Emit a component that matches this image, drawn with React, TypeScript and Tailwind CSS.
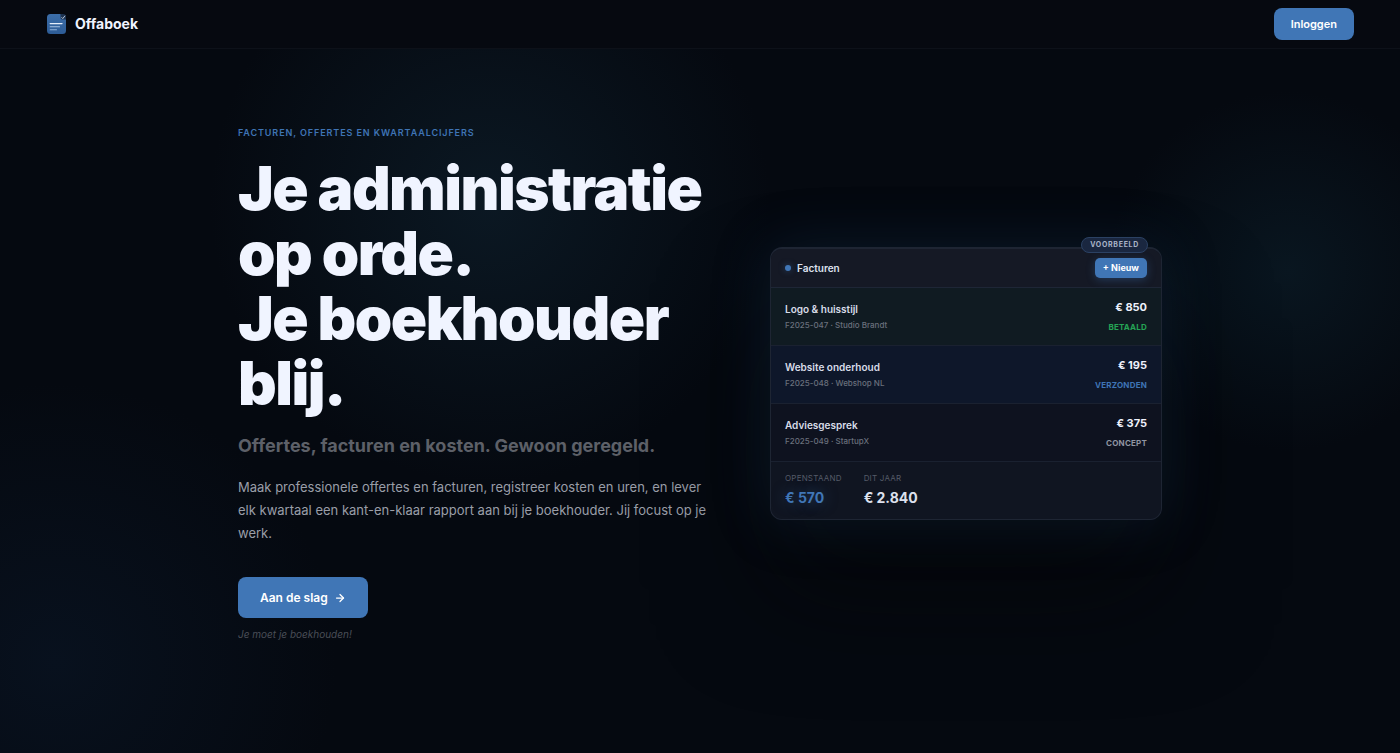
import { ArrowRight } from "lucide-react";
import clsx from "clsx";

interface Invoice {
  title: string;
  number: string;
  client: string;
  amount: string;
  status: string;
  rowClass: string;
  statusClass: string;
}

const invoices: Invoice[] = [
  {
    title: "Logo & huisstijl",
    number: "F2025-047",
    client: "Studio Brandt",
    amount: "€ 850",
    status: "Betaald",
    rowClass: "bg-[#101b22]",
    statusClass: "text-[#25a355]",
  },
  {
    title: "Website onderhoud",
    number: "F2025-048",
    client: "Webshop NL",
    amount: "€ 195",
    status: "Verzonden",
    rowClass: "bg-[#0e172a]",
    statusClass: "text-[#3f74b5]",
  },
  {
    title: "Adviesgesprek",
    number: "F2025-049",
    client: "StartupX",
    amount: "€ 375",
    status: "Concept",
    rowClass: "bg-[#0e121f]",
    statusClass: "text-[#9095a2]",
  },
];

const Logo = () => (
  <svg viewBox="0 0 20 20" className="size-5" aria-hidden="true">
    <defs>
      <linearGradient id="logo-fill" x1="0" y1="0" x2="0" y2="1">
        <stop offset="0" stopColor="#3c6ea9" />
        <stop offset="1" stopColor="#2d5c96" />
      </linearGradient>
    </defs>
    <path
      d="M3.5 0H13.5L19 5.5V16.5a3.5 3.5 0 0 1-3.5 3.5H3.5a3.5 3.5 0 0 1-3.5-3.5V3.5a3.5 3.5 0 0 1 3.5-3.5Z"
      fill="url(#logo-fill)"
    />
    <path d="M13.5 0V3.8a1.7 1.7 0 0 0 1.7 1.7H19V3a3 3 0 0 0-3-3Z" fill="#1c3250" />
    <path d="M14.8 3.6l1 1 2-2.6" fill="none" stroke="#b9c8dc" strokeWidth="1" strokeLinecap="round" />
    <path d="M3.2 9.6H15" stroke="#e6eefa" strokeWidth="1.4" strokeLinecap="round" />
    <path d="M3.2 12.8H12.5" stroke="#a9c4e4" strokeWidth="1.1" strokeLinecap="round" />
    <path d="M3.2 15.8H9.5" stroke="#8fb0d8" strokeWidth="1.1" strokeLinecap="round" />
  </svg>
);

const Header = () => (
  <header className="flex items-center justify-between border-b border-[#0d1119] bg-[#060910] pr-[46px] pl-[47px] py-2">
    <a href="#" className="flex items-center gap-2 text-sm font-bold text-[#f0f4ff]">
      <Logo />
      Offaboek
    </a>
    <button type="button" className="h-8 rounded-lg bg-[#4076b6] px-[17px] text-[11px] font-semibold text-white">
      Inloggen
    </button>
  </header>
);

const InvoiceRow = ({ invoice }: { invoice: Invoice }) => (
  <li
    className={clsx(
      "flex h-[58px] items-center justify-between border-b border-[#1a2130] px-[14px]",
      invoice.rowClass
    )}
  >
    <div>
      <p className="text-[10px] leading-4 font-semibold text-[#d8dce8]">{invoice.title}</p>
      <p className="text-[8px] leading-4 font-medium text-[#6a707c]">
        {invoice.number} · {invoice.client}
      </p>
    </div>
    <div className="flex flex-col items-end gap-1">
      <p className="text-[11px] leading-4 font-bold text-[#eef1fb]">{invoice.amount}</p>
      <p className={clsx("text-[8px] leading-4 font-bold tracking-wide uppercase", invoice.statusClass)}>
        {invoice.status}
      </p>
    </div>
  </li>
);

const InvoiceCard = () => (
  <div className="relative w-[392px] shrink-0">
    <div className="overflow-hidden rounded-xl border border-t-2 border-[#1e2533] bg-[#101521] shadow-[0_0_60px_rgba(35,85,135,0.22),0_70px_110px_rgba(5,5,6,0.6)]">
      <div className="flex h-[39px] items-center justify-between border-b border-[#1e2636] bg-[#151925] px-[14px]">
        <h2 className="flex items-center gap-[6px] text-[10px] font-semibold text-[#dde1ee]">
          <span className="size-[6px] rounded-full bg-[#4076b6] shadow-[0_0_6px_rgba(64,118,182,0.5)]" />
          Facturen
        </h2>
        <button
          type="button"
          className="h-5 rounded-[5px] bg-[#4076b6] px-2 text-[9px] font-bold text-white shadow-[0_2px_8px_rgba(64,118,182,0.35)]"
        >
          + Nieuw
        </button>
      </div>
      <ul>
        {invoices.map((invoice) => (
          <InvoiceRow key={invoice.number} invoice={invoice} />
        ))}
      </ul>
      <dl className="flex gap-[22px] px-[14px] pt-2 pb-[9px]">
        <div>
          <dt className="text-[8px] leading-4 tracking-wide text-[#555b68] uppercase">Openstaand</dt>
          <dd className="text-sm leading-6 font-bold text-[#4076b6] [text-shadow:0_0_14px_rgba(64,118,182,0.5)]">
            € 570
          </dd>
        </div>
        <div>
          <dt className="text-[8px] leading-4 tracking-wide text-[#555b68] uppercase">Dit jaar</dt>
          <dd className="text-sm leading-6 font-bold text-[#dde1ee]">€ 2.840</dd>
        </div>
      </dl>
    </div>
    <span className="absolute -top-[10px] right-[14px] rounded-full border border-[#2b4163] bg-[#1a2740] px-2 text-[7px] leading-[14px] font-bold tracking-widest text-[#aab4c8] uppercase">
      Voorbeeld
    </span>
  </div>
);

const Hero = () => (
  <main className="flex flex-1 justify-center px-8 pt-[76px] pb-24">
    <div className="flex w-full max-w-[924px] items-center gap-14 self-start">
      <section className="min-w-0 flex-1">
        <p className="text-[9px] leading-4 font-semibold tracking-widest text-[#3f74b5] uppercase">
          Facturen, offertes en kwartaalcijfers
        </p>
        <h1 className="mt-[15px] text-[60px] leading-[65px] font-black tracking-tight text-[#f0f4ff]">
          Je administratie
          <br />
          op orde.
          <br />
          Je boekhouder
          <br />
          blij.
        </h1>
        <p className="mt-4 text-lg leading-7 font-bold text-[#5d6068]">
          Offertes, facturen en kosten. Gewoon geregeld.
        </p>
        <p className="mt-4 text-[13px] leading-[23px] text-[#9a9ea8]">
          Maak professionele offertes en facturen, registreer kosten en uren, en lever elk kwartaal een kant-en-klaar
          rapport aan bij je boekhouder. Jij focust op je werk.
        </p>
        <a
          href="#"
          className="mt-8 flex h-[41px] w-fit items-center gap-[6px] rounded-lg bg-[#4076b6] px-[22px] text-xs font-semibold text-white"
        >
          Aan de slag
          <ArrowRight size={12} strokeWidth={2.5} />
        </a>
        <p className="mt-2 text-[10px] leading-4 text-[#4a4e57] italic">Je moet je boekhouden!</p>
      </section>
      <InvoiceCard />
    </div>
  </main>
);

const App = () => (
  <div className="flex min-h-screen flex-col bg-[#050910] bg-[radial-gradient(circle_at_35%_27%,#0b1823_0%,transparent_280px),radial-gradient(circle_at_92%_36%,#091620_0%,transparent_180px),radial-gradient(circle_at_4%_88%,#08111e_0%,transparent_280px)] font-['Inter',sans-serif]">
    <Header />
    <Hero />
  </div>
);

export default App;
